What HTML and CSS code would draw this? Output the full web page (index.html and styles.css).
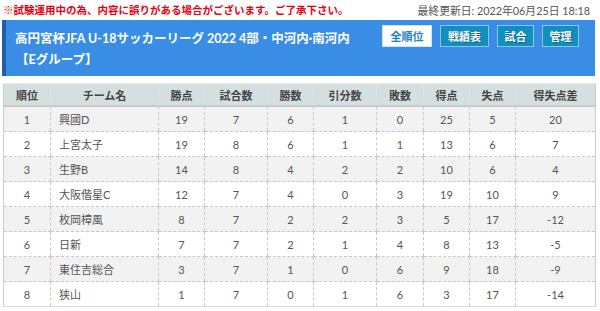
FILE: index.html
```html
<!DOCTYPE html>
<html lang="ja">
<head>
<meta charset="utf-8">
<link rel="stylesheet" href="styles.css">
</head>
<body>
<div class="page">
  <div class="topline">
    <span class="notice">※試験運用中の為、内容に誤りがある場合がございます。ご了承下さい。</span>
    <span class="updated">最終更新日: 2022年06月25日 18:18</span>
  </div>
  <div class="banner">
    <div class="titles">
      <div class="title">高円宮杯JFA U-18サッカーリーグ 2022 4部・中河内·南河内</div>
      <div class="title sub">【Eグループ】</div>
    </div>
    <div class="buttons">
      <span class="btn active w3">全順位</span>
      <span class="btn w3b">戦績表</span>
      <span class="btn w2">試合</span>
      <span class="btn w2">管理</span>
    </div>
  </div>
  <table class="standings">
    <colgroup>
      <col class="c1"><col class="c2"><col class="c3"><col class="c4"><col class="c5">
      <col class="c6"><col class="c7"><col class="c8"><col class="c9"><col class="c10">
    </colgroup>
    <thead>
      <tr><th>順位</th><th>チーム名</th><th>勝点</th><th>試合数</th><th>勝数</th><th>引分数</th><th>敗数</th><th>得点</th><th>失点</th><th>得失点差</th></tr>
    </thead>
    <tbody>
      <tr><td>1</td><td class="team">興國D</td><td>19</td><td>7</td><td>6</td><td>1</td><td>0</td><td>25</td><td>5</td><td>20</td></tr>
      <tr><td>2</td><td class="team">上宮太子</td><td>19</td><td>8</td><td>6</td><td>1</td><td>1</td><td>13</td><td>6</td><td>7</td></tr>
      <tr><td>3</td><td class="team">生野B</td><td>14</td><td>8</td><td>4</td><td>2</td><td>2</td><td>10</td><td>6</td><td>4</td></tr>
      <tr><td>4</td><td class="team">大阪偕星C</td><td>12</td><td>7</td><td>4</td><td>0</td><td>3</td><td>19</td><td>10</td><td>9</td></tr>
      <tr><td>5</td><td class="team">枚岡樟風</td><td>8</td><td>7</td><td>2</td><td>2</td><td>3</td><td>5</td><td>17</td><td>-12</td></tr>
      <tr><td>6</td><td class="team">日新</td><td>7</td><td>7</td><td>2</td><td>1</td><td>4</td><td>8</td><td>13</td><td>-5</td></tr>
      <tr><td>7</td><td class="team">東住吉総合</td><td>3</td><td>7</td><td>1</td><td>0</td><td>6</td><td>9</td><td>18</td><td>-9</td></tr>
      <tr><td>8</td><td class="team">狭山</td><td>1</td><td>7</td><td>0</td><td>1</td><td>6</td><td>3</td><td>17</td><td>-14</td></tr>
    </tbody>
  </table>
</div>
</body>
</html>
```

FILE: styles.css
```css
html, body {
  margin: 0;
  padding: 0;
  background: #fff;
}
body {
  font-family: Lato, "Noto Sans CJK JP", sans-serif;
  color: #555;
}
.page {
  width: 593px;
  padding-left: 2px;
}
.topline {
  display: flex;
  justify-content: space-between;
  align-items: center;
  height: 19px;
  padding-right: 5px;
}
.notice {
  color: #e60012;
  font-weight: bold;
  font-size: 10.5px;
  padding-left: 1px;
}
.updated {
  color: #555;
  font-size: 10.8px;
}
.banner {
  margin-top: 1px;
  height: 56px;
  background: #3a8de4;
  border-left: 4px solid #1f5fa6;
  display: flex;
  justify-content: space-between;
  align-items: flex-start;
  box-sizing: border-box;
}
.titles {
  padding-left: 9px;
  padding-top: 8px;
}
.title {
  color: #fff;
  font-weight: bold;
  font-size: 12.5px;
  line-height: 21px;
  white-space: nowrap;
}
.title.sub {
  margin-left: 1px;
}
.buttons {
  display: flex;
  gap: 8px;
  padding-top: 5px;
  padding-right: 16px;
  flex-shrink: 0;
}
.btn {
  display: inline-flex;
  align-items: center;
  justify-content: center;
  height: 22px;
  padding: 0;
  background: #128fc0;
  border: 1px solid #8fc6e6;
  color: #fff;
  font-weight: bold;
  font-size: 11px;
  text-shadow: 1px 1px 1px rgba(0,0,0,0.35);
  box-sizing: border-box;
  flex-shrink: 0;
}
.btn.w3 { width: 50px; }
.btn.w3b { width: 49px; }
.btn.w2 { width: 37px; }
.btn.active {
  background: #fff;
  color: #1f7fc6;
  border-color: #cfe4f5;
  text-shadow: none;
}
.standings {
  margin-top: 7px;
  margin-left: 1px;
  width: 592px;
  border-collapse: collapse;
  table-layout: fixed;
  font-size: 11px;
  border-left: 1px solid #ccc;
  border-right: 1px solid #ccc;
  border-bottom: 1px solid #ddd;
}
.c1 { width: 47px; }
.c2 { width: 108px; }
.c3 { width: 46px; }
.c4 { width: 63px; }
.c5 { width: 46px; }
.c6 { width: 63px; }
.c7 { width: 47px; }
.c8 { width: 46px; }
.c9 { width: 46px; }
.c10 { width: 80px; }
.standings th {
  background: #d4e0e0;
  color: #444;
  font-weight: bold;
  height: 21px;
  padding: 0;
  border-top: 1px solid #e3e8e8;
  border-bottom: 2px solid #c6c9c9;
  border-left: 1px dashed #e0e6e6;
}
.standings td {
  height: 24px;
  padding: 0;
  text-align: center;
  border-left: 1px dashed #c8c8c8;
  border-bottom: 1px dashed #c8c8c8;
}
.standings th:first-child,
.standings td:first-child {
  border-left: none;
}
.standings td.team {
  text-align: left;
  padding-left: 8px;
}
.standings tbody tr:nth-child(odd) td {
  background: #f2f2f2;
}
```
